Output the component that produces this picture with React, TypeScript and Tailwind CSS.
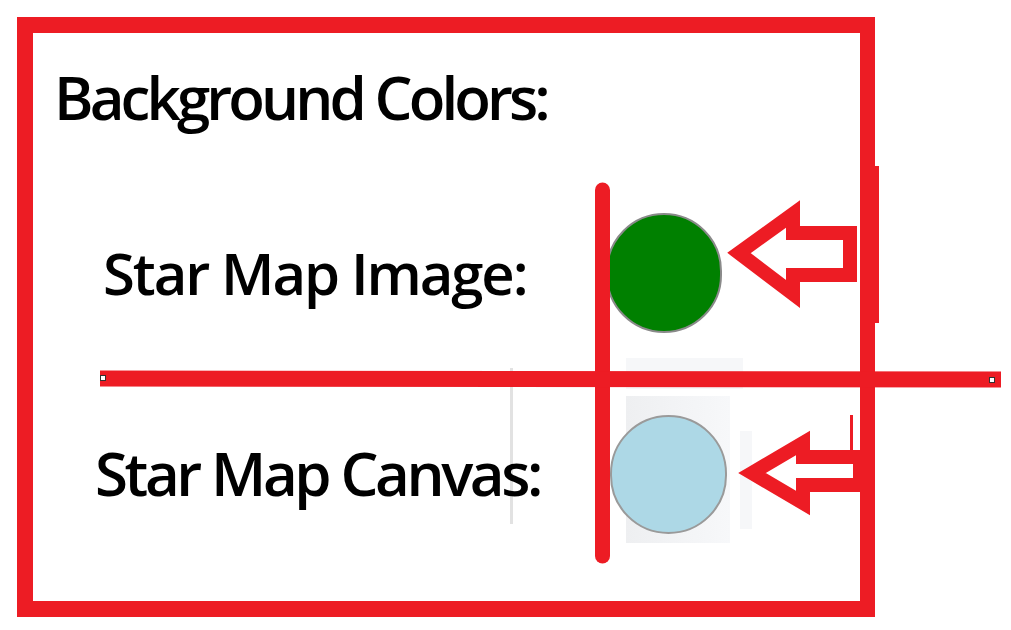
import React from "react";

const RED = "#ED1C24";

function Annotations() {
  return (
    <svg
      className="absolute inset-0 pointer-events-none"
      width={1011}
      height={630}
      viewBox="0 0 1011 630"
    >
      {/* extra right-side stroke */}
      <rect x={872} y={166} width={7} height={157} fill={RED} />
      {/* vertical divider */}
      <line x1={602.5} y1={190} x2={602.5} y2={556} stroke={RED} strokeWidth={15} strokeLinecap="round" />
      {/* horizontal divider */}
      <line x1={100} y1={378.5} x2={1001} y2={379.5} stroke={RED} strokeWidth={16} />
      <rect x={100.5} y={375.5} width={5} height={5} fill="#fff" stroke="#333" strokeWidth={1} />
      <rect x={989.5} y={377.5} width={5} height={5} fill="#fff" stroke="#333" strokeWidth={1} />
      {/* top arrow */}
      <path
        d="M739 253 L793 214 L793 233 L850 233 L850 275 L793 275 L793 294 Z"
        fill="none"
        stroke={RED}
        strokeWidth={14}
        strokeLinejoin="miter"
        strokeMiterlimit={10}
      />
      {/* bottom arrow */}
      <path
        d="M752 473 L803 443 L803 457 L860 457 L860 485 L803 485 L803 503 Z"
        fill="none"
        stroke={RED}
        strokeWidth={14}
        strokeLinejoin="miter"
        strokeMiterlimit={10}
      />
      <rect x={850} y={415} width={3} height={38} fill={RED} />
    </svg>
  );
}

export default function App() {
  const font = { fontFamily: '"Open Sans", "Noto Sans", sans-serif' };
  return (
    <div className="relative w-[1011px] h-[630px] bg-white overflow-hidden" style={font}>
      {/* faint remnants behind the canvas swatch */}
      <div className="absolute left-[510px] top-[368px] w-[3px] h-[156px] bg-[#e2e2e2]" />
      <div className="absolute left-[626px] top-[358px] w-[117px] h-[31px] bg-[#f6f7f9]" />
      <div className="absolute left-[626px] top-[396px] w-[104px] h-[147px] bg-gradient-to-r from-[#eeeff1] to-[#f7f8fa]" />
      <div className="absolute left-[740px] top-[431px] w-[12px] h-[98px] bg-[#f6f7f9]" />

      <div className="relative ml-[17px] mt-[17px] w-[858px] h-[600px] border-[16px] border-r-[15px] border-[#ED1C24] text-black font-semibold">
        <div className="pt-[34px] pl-[21px] h-[94px] text-[60px] leading-none tracking-[-3.9px] whitespace-nowrap">
          Background Colors:
        </div>

        <div className="mt-[86px] flex items-center h-[120px]">
          <div className="pl-[70px] w-[573px] text-[58px] leading-none tracking-[-2.1px] whitespace-nowrap">
            Star Map Image:
          </div>
          <div className="w-[116px] h-[120px] rounded-full bg-[#008000] border-2 border-[#8a8a8a]" />
        </div>

        <div className="mt-[82px] flex items-center h-[119px]">
          <div className="pl-[62px] w-[577px] text-[60px] leading-none tracking-[-3.4px] whitespace-nowrap -translate-y-[2px]">
            Star Map Canvas:
          </div>
          <div className="w-[117px] h-[119px] rounded-full bg-[#ADD8E6] border-2 border-[#9a9a9a]" />
        </div>
      </div>

      <Annotations />
    </div>
  );
}
